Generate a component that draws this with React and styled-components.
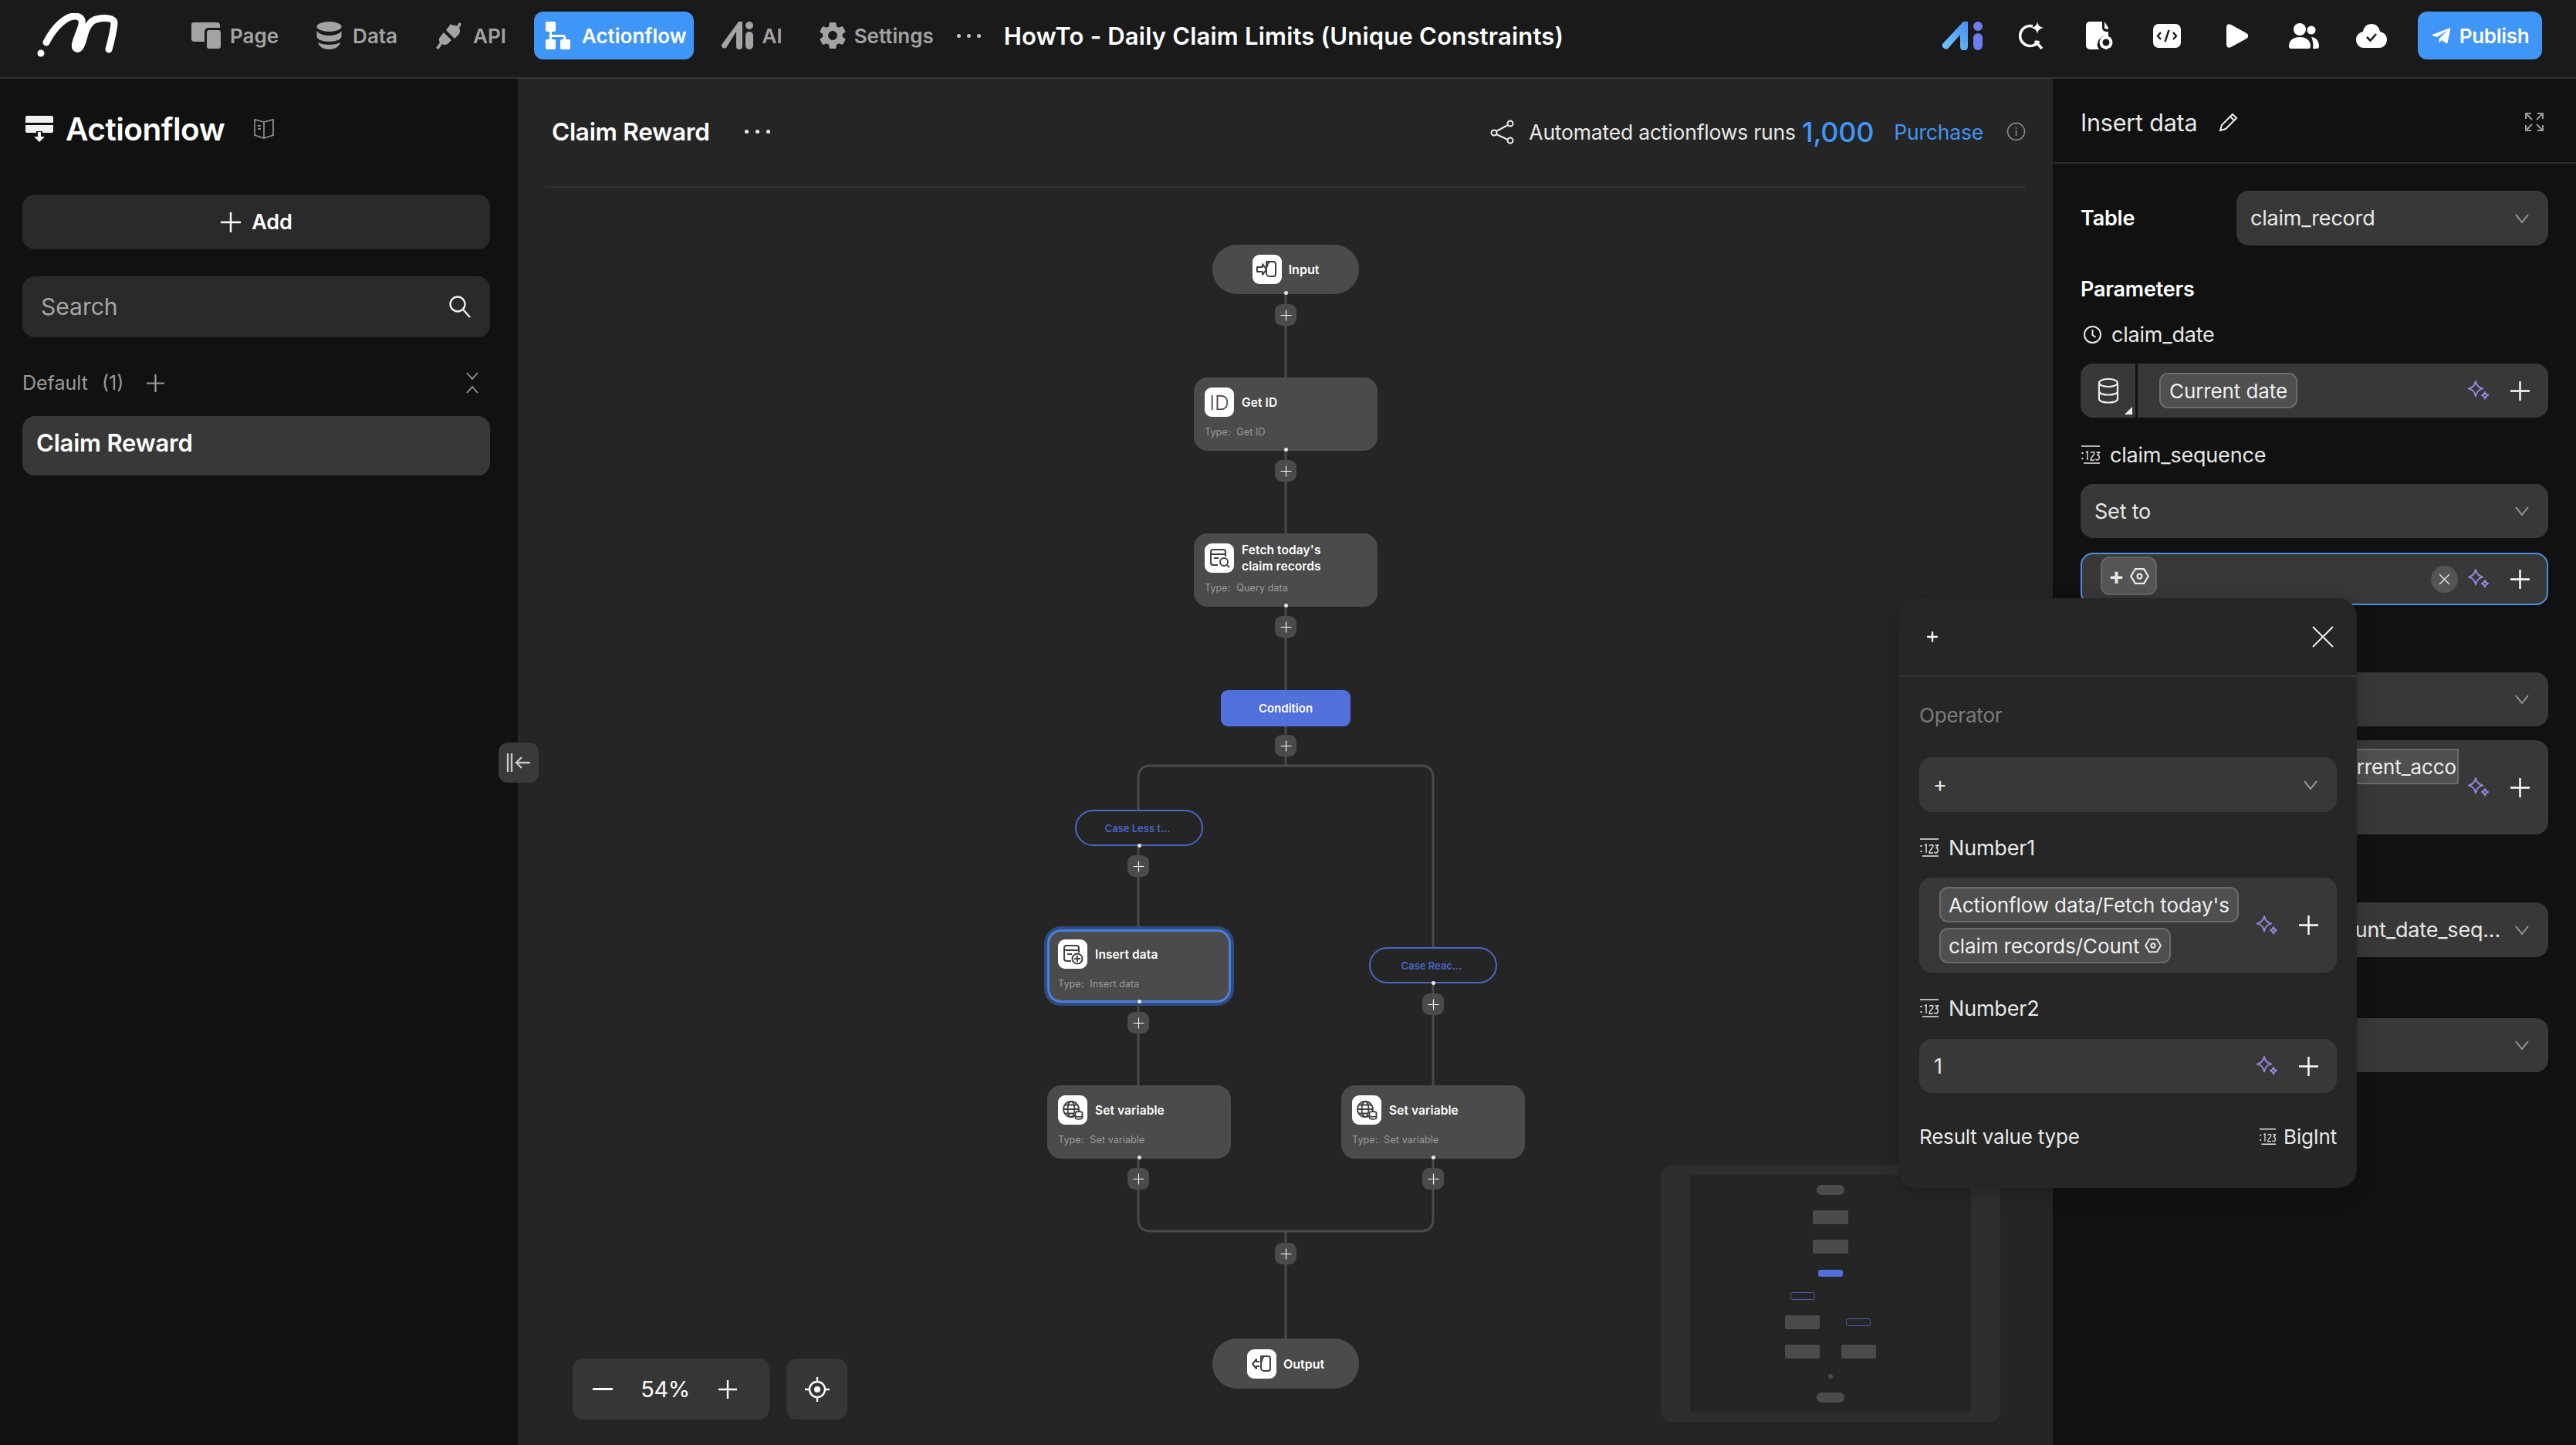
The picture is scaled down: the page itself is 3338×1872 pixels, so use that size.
import React from "react"
import styled, { createGlobalStyle } from "styled-components"
import { IoSettingsSharp } from "react-icons/io5"
import { FaTelegramPlane } from "react-icons/fa"

const FONT = `Inter, "Noto Sans", "Liberation Sans", sans-serif`

const GlobalStyle = createGlobalStyle`
  html, body { margin: 0; padding: 0; background: #1a1a1a; }
  body { font-family: ${FONT}; color: #fff; overflow: hidden; }
  * { box-sizing: border-box; }
`

const Page = styled.div`
  width: 3338px;
  height: 1872px;
  display: flex;
  flex-direction: column;
  overflow: hidden;
`

/* top bar */
const TopBar = styled.header`
  height: 102px;
  flex: none;
  background: #1a1a1a;
  border-bottom: 2px solid #333;
  display: flex;
  align-items: center;
  padding: 0 44px 8px 48px;
`
const Logo = styled.svg`
  width: 106px;
  height: 58px;
  flex: none;
  margin-right: 94px;
`
const NavItem = styled.div`
  display: flex;
  align-items: center;
  gap: ${p => p.$gap || 12}px;
  height: 62px;
  margin-right: ${p => p.$mr || 0}px;
  padding: ${p => (p.$active ? "0 9px 0 15px" : "0")};
  border-radius: 12px;
  background: ${p => (p.$active ? "#4096f6" : "transparent")};
  color: ${p => (p.$active ? "#fff" : "#a3a3a3")};
  font-size: 26px;
  font-weight: 600;
  white-space: nowrap;
`
const Dots = styled.div`
  display: flex;
  gap: ${p => p.$gap || 8}px;
  margin: ${p => p.$margin || 0};
  i { width: 5px; height: 5px; border-radius: 50%; background: ${p => p.$color || "#c4c4c4"}; }
`
const ProjectTitle = styled.div`
  font-size: 31px;
  font-weight: 600;
  letter-spacing: 0.2px;
  white-space: nowrap;
`
const TopRight = styled.div`
  margin-left: auto;
  display: flex;
  align-items: center;
`
const TopIcon = styled.svg`
  width: ${p => p.$w}px;
  height: ${p => p.$h}px;
  margin-right: ${p => p.$mr}px;
  flex: none;
`
const PublishButton = styled.div`
  width: 161px;
  height: 62px;
  border-radius: 12px;
  background: #4096f6;
  display: flex;
  align-items: center;
  justify-content: center;
  gap: 10px;
  font-size: 26px;
  font-weight: 600;
  letter-spacing: -0.3px;
`

/* main layout */
const Main = styled.main`
  flex: 1;
  min-height: 0;
  display: grid;
  grid-template-columns: 671px 1fr 678px;
  position: relative;
`

/* left sidebar */
const Sidebar = styled.aside`
  background: #111;
  padding: 47px 36px 0 29px;
  display: flex;
  flex-direction: column;
`
const SideTitleRow = styled.div`
  height: 36px;
  display: flex;
  align-items: center;
  padding-left: 4px;
  font-size: 40.5px;
  font-weight: 600;
  letter-spacing: -0.5px;
`
const SideTitleIcon = styled.svg`
  margin-right: 16px;
  flex: none;
`
const BookIcon = styled.svg`
  margin-left: 37px;
  flex: none;
`
const SideButton = styled.div`
  height: 71px;
  margin-top: 67px;
  border-radius: 16px;
  background: #2a2a2a;
  display: flex;
  align-items: center;
  justify-content: center;
  gap: 13px;
  font-size: 27px;
  font-weight: 600;
  letter-spacing: -0.2px;
`
const SearchBox = styled.div`
  height: 79px;
  margin-top: 35px;
  border-radius: 16px;
  background: #2a2a2a;
  display: flex;
  align-items: center;
  justify-content: space-between;
  padding: 0 24px 2px;
  color: #a6a6a6;
  font-size: 30px;
`
const GroupRow = styled.div`
  height: 40px;
  margin-top: 39px;
  display: flex;
  align-items: center;
  color: #9a9a9a;
  font-size: 25px;
  span { margin-left: 18px; }
  svg:first-of-type { margin-left: 29px; }
  svg:last-of-type { margin-left: auto; margin-right: 15px; }
`
const FlowItem = styled.div`
  height: 77px;
  margin-top: 23px;
  border-radius: 16px;
  background: #383838;
  display: flex;
  align-items: center;
  padding: 0 0 8px 18px;
  font-size: 31px;
  font-weight: 600;
  letter-spacing: -0.2px;
`

/* canvas */
const Center = styled.section`
  background: #252525;
  display: flex;
  flex-direction: column;
  min-width: 0;
`
const CenterHeader = styled.div`
  height: 141px;
  flex: none;
  margin: 0 35px;
  padding: 0 0 2px 9px;
  border-bottom: 2px solid #323232;
  display: flex;
  align-items: center;
`
const FlowName = styled.div`
  font-size: 31.5px;
  font-weight: 600;
  letter-spacing: -0.3px;
`
const RunsInfo = styled.div`
  margin-left: auto;
  display: flex;
  align-items: center;
  font-size: 26.5px;
  letter-spacing: -0.2px;
  color: #e8e8e8;
  b { color: #4096f6; font-size: 36px; font-weight: 500; margin: 0 26px 0 8px; }
  a { color: #4096f6; margin-right: 30px; }
  svg:first-child { margin-right: 18px; }
`
const Canvas = styled.div`
  position: relative;
  flex: 1;
  min-height: 0;
`
const Edges = styled.svg`
  position: absolute;
  inset: 0;
  width: 1989px;
  height: 1627px;
  fill: none;
  stroke: #4a4a4a;
  stroke-width: 3;
`
const OX = 671
const OY = 243
const FlowNode = styled.div`
  position: absolute;
  left: ${p => p.$x - OX}px;
  top: ${p => p.$y - OY}px;
  width: 238px;
  height: 95px;
  border-radius: 18px;
  background: #4b4b4b;
  padding: 13px 14px;
  ${p => p.$selected && `
    box-shadow: inset 0 0 0 3px #4a7fdc, 0 0 0 4px #2f4c80;
  `}
  &::after {
    content: "";
    position: absolute;
    left: 50%;
    bottom: -1px;
    width: 5px;
    height: 5px;
    margin-left: -2.5px;
    border-radius: 50%;
    background: #e6e6e6;
  }
`
const NodeHead = styled.div`
  display: flex;
  align-items: center;
  gap: 10px;
  height: 38px;
`
const NodeIcon = styled.div`
  width: 38px;
  height: 38px;
  flex: none;
  border-radius: 9px;
  background: #fff;
  color: #4b4b4b;
  display: flex;
  align-items: center;
  justify-content: center;
  font-size: 26px;
  font-weight: 300;
`
const NodeTitle = styled.div`
  font-size: 15.5px;
  font-weight: 600;
  line-height: 21px;
  letter-spacing: 0.1px;
  white-space: pre-line;
`
const NodeType = styled.div`
  margin-top: 7px;
  font-size: 12.5px;
  line-height: 26px;
  color: #9b9b9b;
  letter-spacing: 0.1px;
  span { margin-right: 8px; }
`
const PillNode = styled.div`
  position: absolute;
  left: ${p => p.$x - OX}px;
  top: ${p => p.$y - OY}px;
  width: 190px;
  height: ${p => p.$h}px;
  border-radius: 32px;
  background: #4b4b4b;
  display: flex;
  align-items: center;
  justify-content: center;
  gap: 9px;
  font-size: 16px;
  font-weight: 600;
  &::after {
    content: "";
    display: ${p => (p.$dot ? "block" : "none")};
    position: absolute;
    left: 50%;
    bottom: -1px;
    width: 5px;
    height: 5px;
    margin-left: -2.5px;
    border-radius: 50%;
    background: #e6e6e6;
  }
`
const ConditionNode = styled.div`
  position: absolute;
  left: ${p => p.$x - OX}px;
  top: ${p => p.$y - OY}px;
  width: 168px;
  height: 47px;
  border-radius: 9px;
  background: #5270dc;
  display: flex;
  align-items: center;
  justify-content: center;
  font-size: 15px;
  font-weight: 600;
`
const CaseNode = styled.div`
  position: absolute;
  left: ${p => p.$x - OX}px;
  top: ${p => p.$y - OY}px;
  width: 166px;
  height: 47px;
  border-radius: 24px;
  border: 2px solid #4a67c4;
  background: #252525;
  color: #4a67c4;
  display: flex;
  align-items: center;
  justify-content: center;
  padding-right: 4px;
  font-size: 13px;
  font-weight: 600;
  &::after {
    content: "";
    position: absolute;
    left: 50%;
    bottom: -4px;
    width: 5px;
    height: 5px;
    margin-left: -2.5px;
    border-radius: 50%;
    background: #e6e6e6;
  }
`
const PlusNode = styled.div`
  position: absolute;
  left: ${p => p.$x - OX - 14}px;
  top: ${p => p.$y - OY - 14}px;
  width: 28px;
  height: 28px;
  border-radius: 9px;
  background: #4b4b4b;
  display: flex;
  align-items: center;
  justify-content: center;
`
const ZoomBar = styled.div`
  position: absolute;
  left: ${742 - OX}px;
  top: ${1760 - OY}px;
  display: flex;
  gap: 22px;
`
const ZoomGroup = styled.div`
  height: 79px;
  width: 255px;
  border-radius: 14px;
  background: #363636;
  display: flex;
  align-items: center;
  justify-content: space-between;
  padding: 0 41px 0 26px;
  font-size: 29px;
  letter-spacing: -0.5px;
`
const TargetButton = styled.div`
  height: 79px;
  width: 79px;
  border-radius: 14px;
  background: #363636;
  display: flex;
  align-items: center;
  justify-content: center;
`
const MiniMap = styled.div`
  position: absolute;
  left: ${2152 - OX}px;
  top: ${1510 - OY}px;
  width: 440px;
  height: 332px;
  border-radius: 14px;
  background: #2e2e2e;
`
const MiniView = styled.div`
  position: absolute;
  left: 38px;
  top: 12px;
  width: 364px;
  height: 308px;
  background: #252525;
`
const MiniBlock = styled.div`
  position: absolute;
  left: ${p => p.$x - 2190}px;
  top: ${p => p.$y - 1522}px;
  width: ${p => p.$w}px;
  height: ${p => p.$h}px;
  border-radius: ${p => p.$r || 2}px;
  background: ${p => (p.$outline ? "transparent" : p.$color || "#4b4b4b")};
  border: ${p => (p.$outline ? "1px solid #4a5aa8" : "none")};
`
const CollapseHandle = styled.div`
  position: absolute;
  left: 646px;
  top: 860px;
  width: 52px;
  height: 52px;
  border-radius: 12px;
  background: #3a3a3a;
  display: flex;
  align-items: center;
  justify-content: center;
`

/* right panel */
const RightPanel = styled.aside`
  background: #111;
  display: flex;
  flex-direction: column;
`
const PanelHead = styled.div`
  height: 110px;
  flex: none;
  border-bottom: 2px solid #2c2c2c;
  display: flex;
  align-items: center;
  padding: 4px 41px 0 36px;
  font-size: 30.5px;
  letter-spacing: -0.2px;
  color: #e8e8e8;
  svg:first-of-type { margin-left: 28px; }
  svg:last-of-type { margin-left: auto; }
`
const PanelBody = styled.div`
  padding: 35px 36px 0;
  display: flex;
  flex-direction: column;
`
const TableRow = styled.div`
  display: grid;
  grid-template-columns: 202px 1fr;
  align-items: center;
  font-size: 27px;
  font-weight: 600;
  letter-spacing: -0.2px;
`
const Section = styled.div`
  height: 40px;
  margin-top: 36px;
  display: flex;
  align-items: center;
  font-size: 27px;
  font-weight: 600;
  letter-spacing: -0.2px;
`
const ParamLabel = styled.div`
  height: 40px;
  margin-top: ${p => p.$mt}px;
  display: flex;
  align-items: center;
  gap: ${p => p.$gap || 12}px;
  font-size: 27px;
  letter-spacing: -0.2px;
  color: #e8e8e8;
`
const ClockIcon = styled.svg`
  margin-left: 3px;
  flex: none;
`
const SelectBox = styled.div`
  height: ${p => p.$h || 70}px;
  margin-top: ${p => p.$mt || 0}px;
  border-radius: 16px;
  background: #383838;
  display: flex;
  align-items: center;
  justify-content: ${p => (p.$end ? "flex-end" : "space-between")};
  gap: 18px;
  padding: 0 24px 0 18px;
  font-size: 27px;
  font-weight: 400;
  letter-spacing: -0.2px;
  color: #e8e8e8;
  white-space: nowrap;
  svg { flex: none; }
`
const InputBox = styled.div`
  height: ${p => p.$h || 70}px;
  margin-top: ${p => p.$mt || 0}px;
  border-radius: 16px;
  background: #383838;
  display: flex;
  align-items: center;
  padding: 0 23px 0 ${p => p.$pl || 0}px;
  font-size: 27px;
  color: #e8e8e8;
  position: relative;
  ${p => p.$focus && `box-shadow: inset 0 0 0 2px #4a90e2;`}
`
const InputType = styled.div`
  width: 74px;
  height: 100%;
  flex: none;
  border-right: 3px solid #111;
  margin-right: 28px;
  display: flex;
  align-items: center;
  justify-content: center;
  position: relative;
  &::after {
    content: "";
    position: absolute;
    right: 4px;
    bottom: 4px;
    border-style: solid;
    border-width: 0 0 10px 10px;
    border-color: transparent transparent #eee transparent;
  }
`
const Chip = styled.div`
  height: 46px;
  padding: 0 ${p => p.$pad || 11}px;
  border-radius: 11px;
  background: #4f4f4f;
  border: 2px solid #6b6b6b;
  display: inline-flex;
  align-items: center;
  gap: 7px;
  font-size: 26px;
  letter-spacing: -0.1px;
  color: #eee;
  white-space: nowrap;
`
const HiddenChip = styled(Chip)`
  position: absolute;
  left: 100px;
  top: 11px;
  width: 390px;
  border-radius: 0 2px 2px 0;
  border-width: 2px 2px 2px 0;
  justify-content: flex-end;
  padding: 0 1px 0 0;
`
const OperatorChip = styled.div`
  width: 73px;
  height: 50px;
  margin-top: -8px;
  border-radius: 12px;
  background: #555;
  border: 2px solid #666;
  display: flex;
  align-items: center;
  justify-content: center;
  gap: 7px;
  font-size: 30px;
  font-weight: 700;
`
const ClearButton = styled.div`
  width: 35px;
  height: 35px;
  margin-left: auto;
  margin-right: 13px;
  border-radius: 50%;
  background: #555;
  display: flex;
  align-items: center;
  justify-content: center;
`
const InputTools = styled.div`
  margin-left: ${p => (p.$auto ? "auto" : 0)};
  display: flex;
  align-items: center;
  gap: 26px;
  flex: none;
`

/* operator popup */
const Popup = styled.div`
  position: absolute;
  left: 2460px;
  top: 673px;
  width: 594px;
  height: 764px;
  border-radius: 24px;
  background: #262626;
  box-shadow: 0 6px 24px rgba(0, 0, 0, 0.2);
`
const PopupHead = styled.div`
  height: 102px;
  border-bottom: 2px solid #353535;
  display: flex;
  align-items: center;
  justify-content: space-between;
  padding: 0 30px 0 36px;
  font-size: 26px;
  font-weight: 700;
`
const PopupBody = styled.div`
  padding: 29px 26px 0 27px;
  display: flex;
  flex-direction: column;
`
const PopupLabel = styled.div`
  height: 40px;
  display: flex;
  align-items: center;
  font-size: 26px;
  letter-spacing: -0.2px;
  color: #7c7c7c;
`
const ChipStack = styled.div`
  width: 410px;
  margin-right: 10px;
  display: flex;
  flex-direction: column;
  align-items: flex-start;
  gap: 7px;
`
const ResultRow = styled.div`
  height: 40px;
  margin-top: 36px;
  display: flex;
  align-items: center;
  justify-content: space-between;
  font-size: 26px;
  letter-spacing: -0.2px;
  color: #e8e8e8;
`
const ResultType = styled.div`
  display: flex;
  align-items: center;
  gap: 9px;
`

/* drawings */
const Plus = ({ size = 27, color = "#fff", width = 2.4 }) => (
  <svg width={size} height={size} viewBox="0 0 27 27" fill="none" stroke={color} strokeWidth={width}>
    <path d="M13.5 1v25M1 13.5h25" />
  </svg>
)
const Chevron = () => (
  <svg width="20" height="14" viewBox="0 0 20 14" fill="none" stroke="#9a9a9a" strokeWidth="2">
    <path d="M2 2l8 10 8-10" />
  </svg>
)
const Spark = () => (
  <svg width="28" height="28" viewBox="0 0 28 28" fill="none" stroke="#9a83d8" strokeWidth="2" strokeLinejoin="round">
    <path d="M10 2c1 5 3 8 9 9.5-6 1.5-8 4.500-9 10-1-5.500-3-8.500-9-10 6-1.500 8-4.500 9-9.500z" />
    <path d="M22 16c.4 2 1.300 3.200 4 4-2.700.8-3.600 2-4 4.500-.4-2.500-1.300-3.700-4-4.500 2.700-.8 3.600-2 4-4z" />
  </svg>
)
const NumberIcon = ({ w = 26 }) => (
  <svg width={w} height={w} viewBox="0 0 26 26" fill="none" stroke="#e8e8e8">
    <path d="M1 2h24M4 24h21" strokeWidth="1.500" />
    <path d="M1.500 11h2M1.500 18h2" strokeWidth="2" />
    <path d="M7 10l2-1v11M13 11c1-2 5-2 5 0 0 3-5 5-5 9h5M20.500 10h4l-2.500 3.500c3 0 3 6-.2 6.500-1.200 0-2-.5-2.300-1.500" strokeWidth="1.400" />
  </svg>
)
const HexDot = ({ size = 20 }) => (
  <svg width={size} height={size} viewBox="0 0 20 20" fill="none" stroke="#e8e8e8" strokeWidth="1.800">
    <path d="M5.500 2.500h9L19 10l-4.500 7.500h-9L1 10z" />
    <circle cx="10" cy="10" r="2.400" />
  </svg>
)
const TableNodeIcon = ({ extra }) => (
  <svg width="28" height="28" viewBox="0 0 28 28" fill="none" stroke="#3f3f3f" strokeWidth="2">
    <path d="M12 23H6a3 3 0 0 1-3-3V6a3 3 0 0 1 3-3h13a3 3 0 0 1 3 3v6" />
    <path d="M3 9h19M7 14h6" />
    {extra === "search" && <><circle cx="20" cy="19" r="5" /><path d="M24 23l3 3" /></>}
    {extra === "add" && <><circle cx="20" cy="20" r="6.500" /><path d="M20 16v8M16 20h8" /></>}
  </svg>
)
const GlobeIcon = () => (
  <svg width="28" height="28" viewBox="0 0 28 28" fill="none" stroke="#3f3f3f" strokeWidth="1.800">
    <circle cx="12" cy="13" r="10" />
    <ellipse cx="12" cy="13" rx="4.500" ry="10" />
    <path d="M2 13h20M4 7.500h16M4 18.500h11" />
    <ellipse cx="22" cy="18" rx="4.500" ry="2" fill="#fff" />
    <path d="M17.500 18v6c0 2.500 9 2.500 9 0v-6M17.500 21c0 2.500 9 2.500 9 0" fill="#fff" />
  </svg>
)
const DoorIcon = ({ out }) => (
  <svg width="28" height="28" viewBox="0 0 28 28" fill="none" stroke="#3f3f3f" strokeWidth="2" strokeLinejoin="round">
    <path d="M13 4h9a3 3 0 0 1 3 3v13a3 3 0 0 1-3 3h-5a4 4 0 0 1-4-4z" />
    <path d="M17 4c-2 2-3 4-3 7" />
    {out
      ? <path d="M11 11H7V8l-5 6 5 6v-3h4" />
      : <path d="M1 11h7V7l5 7-5 7v-4H1z" />}
  </svg>
)
const Tick = () => <svg width="16" height="16" viewBox="0 0 14 14" fill="#fff"><path d="M1 6h5V1h2v5h5v2H8v5H6V8H1z" /></svg>

const NODES = [
  { x: 1547, y: 489, title: "Get ID", type: "Get ID", icon: <span>ID</span> },
  { x: 1547, y: 691, title: "Fetch today's\nclaim records", type: "Query data", icon: <TableNodeIcon extra="search" /> },
  { x: 1357, y: 1204, title: "Insert data", type: "Insert data", icon: <TableNodeIcon extra="add" />, selected: true },
  { x: 1357, y: 1406, title: "Set variable", type: "Set variable", icon: <GlobeIcon /> },
  { x: 1738, y: 1406, title: "Set variable", type: "Set variable", icon: <GlobeIcon /> },
]
const PLUSES = [[1666, 408], [1666, 610], [1666, 812], [1666, 966], [1475, 1122], [1475, 1325], [1475, 1527], [1857, 1301], [1857, 1527], [1666, 1624]]
const MINI = [
  { x: 2354, y: 1535, w: 36, h: 13, r: 6 },
  { x: 2349, y: 1568, w: 46, h: 18 },
  { x: 2349, y: 1606, w: 46, h: 18 },
  { x: 2356, y: 1645, w: 32, h: 9, r: 3, color: "#5270dc" },
  { x: 2320, y: 1674, w: 32, h: 10, r: 3, outline: true },
  { x: 2313, y: 1704, w: 45, h: 18 },
  { x: 2392, y: 1708, w: 32, h: 10, r: 3, outline: true },
  { x: 2313, y: 1742, w: 45, h: 18 },
  { x: 2386, y: 1742, w: 45, h: 18 },
  { x: 2369, y: 1780, w: 6, h: 6, r: 3 },
  { x: 2354, y: 1804, w: 36, h: 13, r: 6 },
]

const Tools = ({ auto }) => (
  <InputTools $auto={auto}>
    <Spark />
    <Plus />
  </InputTools>
)

const Node = ({ x, y, title, type, icon, selected }) => (
  <FlowNode $x={x} $y={y} $selected={selected}>
    <NodeHead>
      <NodeIcon>{icon}</NodeIcon>
      <NodeTitle>{title}</NodeTitle>
    </NodeHead>
    <NodeType><span>Type:</span>{type}</NodeType>
  </FlowNode>
)

const App = () => (
  <Page>
    <GlobalStyle />
    <TopBar>
      <Logo viewBox="0 0 106 58" fill="none" stroke="#fff" strokeLinecap="round">
        <circle cx="5" cy="52" r="4.500" fill="#fff" stroke="none" />
        <path d="M12 38C22 18 38 3 50 4c10 1 10 8 5 20-4 11-8 20-4 22 5 2 8-8 10-16 2-9 7-20 16-22 9-2 24-3 23 6-1 9-4 22-7 33" strokeWidth="9" />
      </Logo>
      <NavItem $mr={49}>
        <svg width="38" height="34" viewBox="0 0 38 34" fill="#a3a3a3">
          <path d="M3 0h30a4 4 0 0 1 4 4v3H22a5 5 0 0 0-5 5v13H4a4 4 0 0 1-4-4V3a3 3 0 0 1 3-3z" />
          <rect x="20" y="10" width="18" height="24" rx="3" />
        </svg>
        Page
      </NavItem>
      <NavItem $mr={49} $gap={14}>
        <svg width="33" height="36" viewBox="0 0 33 36" fill="#a3a3a3">
          <ellipse cx="16.500" cy="6.500" rx="16" ry="6.500" />
          <path d="M.5 12c3 4 9 6 16 6s13-2 16-6v7c0 4-7 7-16 7S.5 23 .5 19z" />
          <path d="M2 27c4 2 9 3 14.500 3s10.500-1 14.500-3c-1 5-7 9-14.500 9S3 32 2 27z" />
        </svg>
        Data
      </NavItem>
      <NavItem $mr={36} $gap={14}>
        <svg width="35" height="35" viewBox="0 0 35 35" fill="#a3a3a3">
          <path d="M20 2l3 2c3-1 6 0 8 3s1 7-1 9l-5 5-11-11z" />
          <path d="M31 0l3 2-3 5-3-2z" />
          <path d="M11 13l10 10-4 4c-2 2-5 3-8 1l-5 7-3-2 5-7c-2-3-1-6 1-8z" />
        </svg>
        API
      </NavItem>
      <NavItem $active $mr={36} $gap={15}>
        <svg width="32" height="36" viewBox="0 0 32 36" fill="#fff">
          <rect x="0" y="0" width="13" height="13" rx="2" />
          <rect x="0" y="23" width="13" height="13" rx="2" />
          <rect x="19" y="23" width="13" height="13" rx="2" />
          <path d="M5 13h3v4h15a3 3 0 0 1 3 3v3h-3v-3H8v3H5z" />
        </svg>
        Actionflow
      </NavItem>
      <NavItem $mr={46} $gap={11}>
        <svg width="42" height="36" viewBox="0 0 42 36" fill="#a3a3a3">
          <path d="M22 0h5v32a4 4 0 0 1-8 0V13L6 34a4 4 0 0 1-6-4z" />
          <circle cx="36" cy="5" r="5" />
          <rect x="31" y="13" width="10" height="23" rx="5" />
        </svg>
        AI
      </NavItem>
      <NavItem $gap={9}>
        <IoSettingsSharp size={38} color="#a3a3a3" />
        Settings
      </NavItem>
      <Dots $margin="0 30px"><i /><i /><i /></Dots>
      <ProjectTitle>HowTo - Daily Claim Limits (Unique Constraints)</ProjectTitle>
      <TopRight>
        <TopIcon $w={54} $h={37} $mr={45} viewBox="0 0 54 37">
          <defs>
            <linearGradient id="aiGrad" x1="0" y1="1" x2="1" y2="0">
              <stop offset="0" stopColor="#6fcbfb" />
              <stop offset="1" stopColor="#4a8cf0" />
            </linearGradient>
          </defs>
          <path d="M28 0h6v32a5 5 0 0 1-10 1V17L8 35a5 5 0 0 1-7-6z" fill="url(#aiGrad)" />
          <circle cx="47" cy="6" r="6" fill="#6d7cf0" />
          <rect x="41" y="15" width="12" height="22" rx="6" fill="#6d7cf0" />
        </TopIcon>
        <TopIcon $w={34} $h={36} $mr={54} viewBox="0 0 34 36" fill="none">
          <path d="M19 6a13 13 0 1 0 8 19" stroke="#fff" strokeWidth="3.500" />
          <path d="M22 25l9 10" stroke="#fff" strokeWidth="3.500" />
          <path d="M25 0c1 5 3 7 8 8-5 1-7 3-8 8-1-5-3-7-8-8 5-1 7-3 8-8z" fill="#fff" />
        </TopIcon>
        <TopIcon $w={36} $h={36} $mr={51} viewBox="0 0 36 36" fill="#fff">
          <path d="M5 0h16v8a5 5 0 0 0 5 5h3v6a11 11 0 0 0-12 17H5a5 5 0 0 1-5-5V5a5 5 0 0 1 5-5z" />
          <path d="M24 0l5 8a1 1 0 0 1-3 1h-2z" />
          <circle cx="26" cy="27" r="6.500" fill="none" stroke="#fff" strokeWidth="4" />
          <path d="M26 18v3M26 33v3M18 27h3M31 27h3M20 21l2 2M30 31l2 2M32 21l-2 2M22 31l-2 2" stroke="#fff" strokeWidth="2.500" />
        </TopIcon>
        <TopIcon $w={36} $h={31} $mr={59} viewBox="0 0 36 31">
          <rect width="36" height="31" rx="7" fill="#fff" />
          <path d="M10 11l-4 4.500 4 4.500M26 11l4 4.500-4 4.500M20.500 8l-5 15" fill="none" stroke="#1a1a1a" strokeWidth="2.400" />
        </TopIcon>
        <TopIcon $w={28} $h={31} $mr={53} viewBox="0 0 28 31" fill="#fff">
          <path d="M0 4c0-3 3-5 6-3l20 11c3 2 3 5 0 7L6 30c-3 2-6 0-6-3z" />
        </TopIcon>
        <TopIcon $w={39} $h={33} $mr={48} viewBox="0 0 39 33" fill="#fff">
          <circle cx="14" cy="8" r="8" />
          <path d="M0 30c0-8 6-12 14-12s14 4 14 12c0 2-1 3-3 3H3c-2 0-3-1-3-3z" />
          <circle cx="29" cy="9" r="5.500" />
          <path d="M29 18c6 0 10 5 10 12 0 2-1 3-3 3h-5c1-5 0-11-2-15z" />
        </TopIcon>
        <TopIcon $w={40} $h={31} $mr={40} viewBox="0 0 40 31">
          <path d="M20 0c6 0 10 4 11 10 5 1 9 5 9 10 0 6-4 11-10 11H10C4 31 0 26 0 20c0-5 4-9 9-10 1-6 5-10 11-10z" fill="#fff" />
          <path d="M14 17l4.500 4.500L26 13" fill="none" stroke="#1a1a1a" strokeWidth="2.600" />
        </TopIcon>
        <PublishButton><FaTelegramPlane size={27} />Publish</PublishButton>
      </TopRight>
    </TopBar>

    <Main>
      <Sidebar>
        <SideTitleRow>
          <SideTitleIcon width="36" height="34" viewBox="0 0 36 34" fill="#f2f2f2">
            <path d="M2 0h32a2 2 0 0 1 2 2v7H0V2a2 2 0 0 1 2-2zM0 12h36v8a2 2 0 0 1-2 2H22v-2h-8v2H2a2 2 0 0 1-2-2z" />
            <path d="M16 21h4v6h5l-7 7-7-7h5z" />
          </SideTitleIcon>
          Actionflow
          <BookIcon width="28" height="28" viewBox="0 0 28 28" fill="none" stroke="#8a8a8a" strokeWidth="1.800">
            <path d="M14 5L2 2v20l12 4 12-4V2zM14 5v21M6 10h4M6 14h4" />
          </BookIcon>
        </SideTitleRow>
        <SideButton><Plus size={28} />Add</SideButton>
        <SearchBox>
          Search
          <svg width="30" height="30" viewBox="0 0 30 30" fill="none" stroke="#eee" strokeWidth="2.400">
            <circle cx="12" cy="12" r="9.500" />
            <path d="M19 19l9 10" />
          </svg>
        </SearchBox>
        <GroupRow>
          Default<span>(1)</span>
          <Plus size={25} color="#9a9a9a" />
          <svg width="16" height="28" viewBox="0 0 16 28" fill="none" stroke="#9a9a9a" strokeWidth="1.800">
            <path d="M1 1l7 8 7-8M1 27l7-8 7 8" />
          </svg>
        </GroupRow>
        <FlowItem>Claim Reward</FlowItem>
      </Sidebar>

      <Center>
        <CenterHeader>
          <FlowName>Claim Reward</FlowName>
          <Dots $gap={9} $margin="0 0 0 45px" $color="#eee"><i /><i /><i /></Dots>
          <RunsInfo>
            <svg width="32" height="32" viewBox="0 0 32 32" fill="none" stroke="#eee" strokeWidth="2">
              <circle cx="5" cy="17" r="3.500" /><circle cx="26" cy="5" r="3.500" /><circle cx="26" cy="27" r="3.500" />
              <path d="M8 15l15-8M8 19l15 7" />
            </svg>
            Automated actionflows runs
            <b>1,000</b>
            <a>Purchase</a>
            <svg width="25" height="25" viewBox="0 0 25 25" fill="none" stroke="#8a8a8a" strokeWidth="1.600">
              <circle cx="12.500" cy="12.500" r="11" /><path d="M12.500 11v7M12.500 7v2" />
            </svg>
          </RunsInfo>
        </CenterHeader>
        <Canvas>
          <Edges viewBox={`${OX} ${OY} 1989 1627`}>
            <path d="M1666 381V489M1666 584V691M1666 786V894M1666 941V992" />
            <path d="M1475 1049V1008Q1475 992 1491 992H1841Q1857 992 1857 1008V1227" />
            <path d="M1475 1096V1204M1475 1298V1406M1857 1274V1406" />
            <path d="M1475 1501V1579Q1475 1595 1491 1595H1841Q1857 1595 1857 1579V1501M1666 1595V1734" />
          </Edges>
          <PillNode $x={1571} $y={317} $h={64} $dot>
            <NodeIcon><DoorIcon /></NodeIcon>Input
          </PillNode>
          {NODES.map(n => <Node key={`${n.x}-${n.y}`} {...n} />)}
          <ConditionNode $x={1582} $y={894}>Condition</ConditionNode>
          <CaseNode $x={1393} $y={1049}>Case Less t...</CaseNode>
          <CaseNode $x={1774} $y={1227}>Case Reac...</CaseNode>
          {PLUSES.map(([x, y]) => (
            <PlusNode key={`${x}-${y}`} $x={x} $y={y}><Plus size={15} width={2} /></PlusNode>
          ))}
          <PillNode $x={1571} $y={1734} $h={65}>
            <NodeIcon><DoorIcon out /></NodeIcon>Output
          </PillNode>
          <ZoomBar>
            <ZoomGroup>
              <svg width="26" height="3" viewBox="0 0 26 3"><rect width="26" height="3" fill="#fff" /></svg>
              54%
              <Plus size={26} />
            </ZoomGroup>
            <TargetButton>
              <svg width="34" height="34" viewBox="0 0 34 34" fill="none" stroke="#fff" strokeWidth="2.400">
                <circle cx="17" cy="17" r="10" /><circle cx="17" cy="17" r="4" fill="#fff" stroke="none" />
                <path d="M17 1v6M17 27v6M1 17h6M27 17h6" />
              </svg>
            </TargetButton>
          </ZoomBar>
          <MiniMap>
            <MiniView>
              {MINI.map(m => (
                <MiniBlock key={`${m.x}-${m.y}`} $x={m.x} $y={m.y} $w={m.w} $h={m.h} $r={m.r} $color={m.color} $outline={m.outline} />
              ))}
            </MiniView>
          </MiniMap>
        </Canvas>
      </Center>

      <RightPanel>
        <PanelHead>
          Insert data
          <svg width="26" height="26" viewBox="0 0 26 26" fill="none" stroke="#eee" strokeWidth="2">
            <path d="M2 24l2-7L18 3l5 5L9 22zM15 6l5 5" />
          </svg>
          <svg width="26" height="26" viewBox="0 0 26 26" fill="none" stroke="#9a9a9a" strokeWidth="2">
            <path d="M2 9V2h7M2 2l8 8M24 9V2h-7M24 2l-8 8M2 17v7h7M2 24l8-8M24 17v7h-7M24 24l-8-8" />
          </svg>
        </PanelHead>
        <PanelBody>
          <TableRow>
            Table
            <SelectBox $h={71}>claim_record<Chevron /></SelectBox>
          </TableRow>
          <Section>Parameters</Section>
          <ParamLabel $mt={19}>
            <ClockIcon width="25" height="25" viewBox="0 0 25 25" fill="none" stroke="#e8e8e8" strokeWidth="2">
              <circle cx="12.500" cy="12.500" r="10.500" /><path d="M12.500 6v7l4 3" />
            </ClockIcon>
            claim_date
          </ParamLabel>
          <InputBox $mt={18}>
            <InputType>
              <svg width="28" height="33" viewBox="0 0 28 33" fill="none" stroke="#eee" strokeWidth="2.200">
                <ellipse cx="14" cy="6" rx="12" ry="5" />
                <path d="M2 6v21c0 6 24 6 24 0V6M2 17c0 6 24 6 24 0" />
              </svg>
            </InputType>
            <Chip>Current date</Chip>
            <Tools auto />
          </InputBox>
          <ParamLabel $mt={28} $gap={12}><NumberIcon />claim_sequence</ParamLabel>
          <SelectBox $mt={18}>Set to<Chevron /></SelectBox>
          <InputBox $mt={19} $h={68} $focus $pl={26}>
            <OperatorChip>+<HexDot size={25} /></OperatorChip>
            <ClearButton>
              <svg width="15" height="15" viewBox="0 0 15 15" stroke="#ddd" strokeWidth="1.600"><path d="M1 1l13 13M14 1L1 14" /></svg>
            </ClearButton>
            <Tools />
          </InputBox>
          <SelectBox $mt={87} $end><Chevron /></SelectBox>
          <InputBox $mt={18} $h={122}>
            <HiddenChip>rrent_acco</HiddenChip>
            <Tools auto />
          </InputBox>
          <SelectBox $mt={88} $h={71} $end>unt_date_seq...<Chevron /></SelectBox>
          <SelectBox $mt={79} $end><Chevron /></SelectBox>
        </PanelBody>
      </RightPanel>

      <CollapseHandle>
        <svg width="32" height="26" viewBox="0 0 32 26" fill="none" stroke="#c8c8c8" strokeWidth="2.400">
          <path d="M2 1v24M7 1v24M31 13H14M20 6l-7 7 7 7" />
        </svg>
      </CollapseHandle>

      <Popup>
        <PopupHead>
          <Tick />
          <svg width="28" height="28" viewBox="0 0 28 28" stroke="#eee" strokeWidth="2"><path d="M1 1l26 26M27 1L1 27" /></svg>
        </PopupHead>
        <PopupBody>
          <PopupLabel>Operator</PopupLabel>
          <SelectBox $mt={35} $h={71}>+<Chevron /></SelectBox>
          <ParamLabel $mt={26} $gap={12}><NumberIcon />Number1</ParamLabel>
          <InputBox $mt={19} $h={123} $pl={26}>
            <ChipStack>
              <Chip $pad={10}>Actionflow data/Fetch today's</Chip>
              <Chip $pad={10}>claim records/Count<HexDot size={22} /></Chip>
            </ChipStack>
            <Tools auto />
          </InputBox>
          <ParamLabel $mt={26} $gap={12}><NumberIcon />Number2</ParamLabel>
          <InputBox $mt={20} $pl={19}>1<Tools auto /></InputBox>
          <ResultRow>
            Result value type
            <ResultType><NumberIcon w={23} />BigInt</ResultType>
          </ResultRow>
        </PopupBody>
      </Popup>
    </Main>
  </Page>
)

export default App
